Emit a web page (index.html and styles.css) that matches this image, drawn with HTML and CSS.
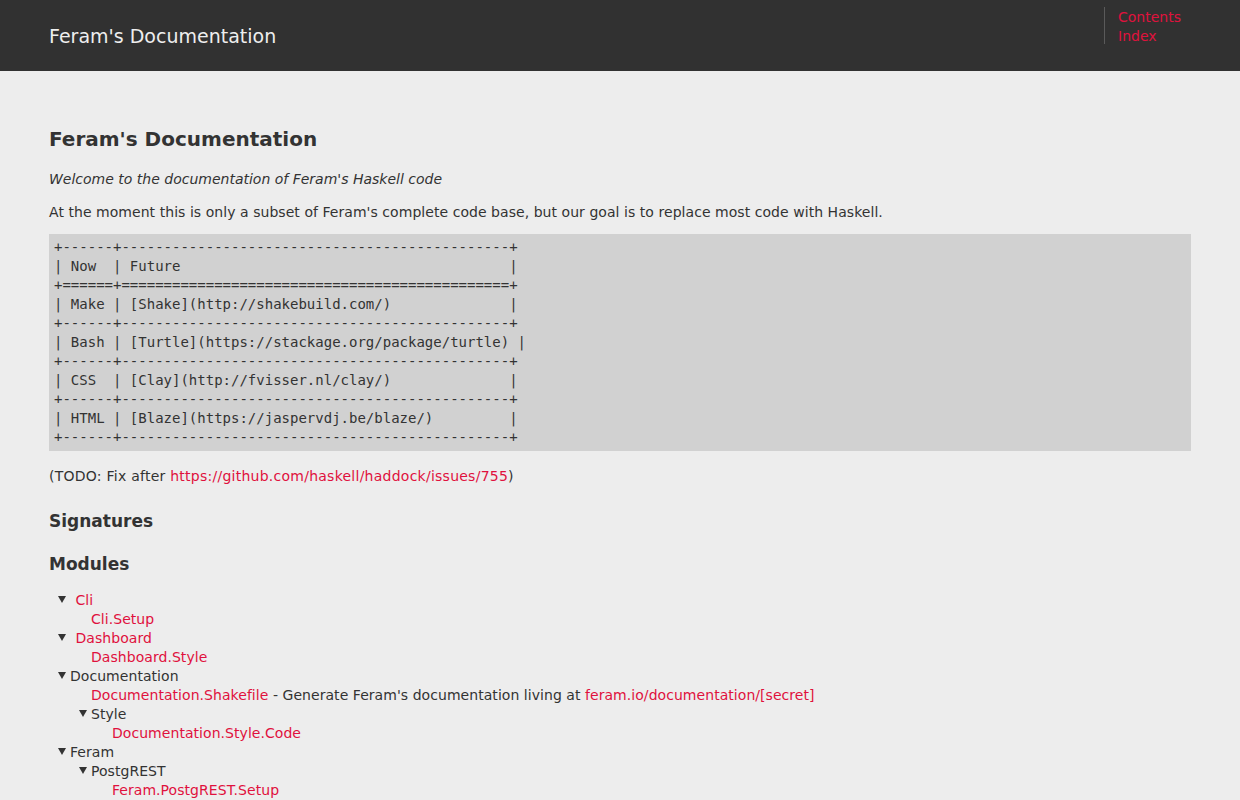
FILE: index.html
```html
<!DOCTYPE html>
<html>
<head>
<meta charset="utf-8">
<title>Feram's Documentation</title>
<link rel="stylesheet" href="styles.css">
</head>
<body>
<header class="topbar">
  <div class="brand">Feram's Documentation</div>
  <ul class="nav">
    <li><a href="#">Contents</a></li>
    <li><a href="#">Index</a></li>
  </ul>
</header>
<main class="content">
  <h1 class="title">Feram's Documentation</h1>
  <p class="lead"><em>Welcome to the documentation of Feram's Haskell code</em></p>
  <p class="para">At the moment this is only a subset of Feram's complete code base, but our goal is to replace most code with Haskell.</p>
  <pre class="code">+------+----------------------------------------------+
| Now  | Future                                       |
+======+==============================================+
| Make | [Shake](http://shakebuild.com/)              |
+------+----------------------------------------------+
| Bash | [Turtle](https://stackage.org/package/turtle) |
+------+----------------------------------------------+
| CSS  | [Clay](http://fvisser.nl/clay/)              |
+------+----------------------------------------------+
| HTML | [Blaze](https://jaspervdj.be/blaze/)         |
+------+----------------------------------------------+</pre>
  <p class="todo">(TODO: Fix after <a href="#">https://github.com/haskell/haddock/issues/755</a>)</p>
  <h2 class="sec sig">Signatures</h2>
  <h2 class="sec mods">Modules</h2>
  <ul class="tree">
    <li><span class="tri"></span> <a class="gap" href="#">Cli</a>
      <ul class="tree sub"><li><a href="#">Cli.Setup</a></li></ul>
    </li>
    <li><span class="tri"></span> <a class="gap" href="#">Dashboard</a>
      <ul class="tree sub"><li><a href="#">Dashboard.Style</a></li></ul>
    </li>
    <li><span class="tri"></span>Documentation
      <ul class="tree sub">
        <li><a href="#">Documentation.Shakefile</a> - Generate Feram's documentation living at <a href="#">feram.io/documentation/[secret]</a></li>
        <li><span class="tri"></span>Style
          <ul class="tree sub"><li><a href="#">Documentation.Style.Code</a></li></ul>
        </li>
      </ul>
    </li>
    <li><span class="tri"></span>Feram
      <ul class="tree sub">
        <li><span class="tri"></span>PostgREST
          <ul class="tree sub"><li><a href="#">Feram.PostgREST.Setup</a></li></ul>
        </li>
      </ul>
    </li>
  </ul>
</main>
</body>
</html>
```
FILE: styles.css
```css
html, body {
  margin: 0;
  padding: 0;
}
body {
  background: #ededed;
  color: #333333;
  font-family: "DejaVu Sans", Verdana, sans-serif;
  font-size: 14px;
  line-height: 19px;
}
a {
  color: #e0113d;
  text-decoration: none;
}
.topbar {
  height: 71px;
  background: #313131;
  display: flex;
  justify-content: space-between;
  align-items: flex-start;
  padding-left: 49px;
}
.brand {
  color: #eeeeee;
  font-size: 19px;
  line-height: 26px;
  margin-top: 23px;
}
.nav {
  list-style: none;
  margin: 7px 49px 0 0;
  padding: 1px 0 0 13px;
  width: 73px;
  height: 36px;
  border-left: 1px solid #5a5a5a;
}
.nav li {
  line-height: 19px;
}
.content {
  padding: 0 49px;
}
.title {
  font-size: 20px;
  line-height: 26px;
  font-weight: bold;
  margin: 55px 0 18px;
}
.lead {
  margin: 0 0 14px;
}
.para {
  margin: 0 0 12px;
  letter-spacing: 0.05px;
}
.todo {
  margin: 0;
  letter-spacing: 0.25px;
}
.code {
  background: #d1d1d1;
  margin: 0 0 16px;
  padding: 4px 5px;
  font-family: "DejaVu Sans Mono", Menlo, monospace;
  font-size: 14px;
  line-height: 19px;
  color: #333333;
}
.sec {
  font-size: 17px;
  line-height: 22px;
  font-weight: bold;
}
.sig {
  margin: 24px 0 21px;
}
.mods {
  margin: 0 0 16px;
}
.tree {
  list-style: none;
  margin: 0;
  padding: 0 0 0 21px;
}
.tree li {
  letter-spacing: 0.05px;
}
.gap {
  margin-left: 1px;
}
.tri {
  display: inline-block;
  width: 0;
  height: 0;
  margin-left: -12px;
  margin-right: 4px;
  border-left: 4px solid transparent;
  border-right: 4px solid transparent;
  border-top: 7px solid #333333;
  vertical-align: 2px;
}
```
